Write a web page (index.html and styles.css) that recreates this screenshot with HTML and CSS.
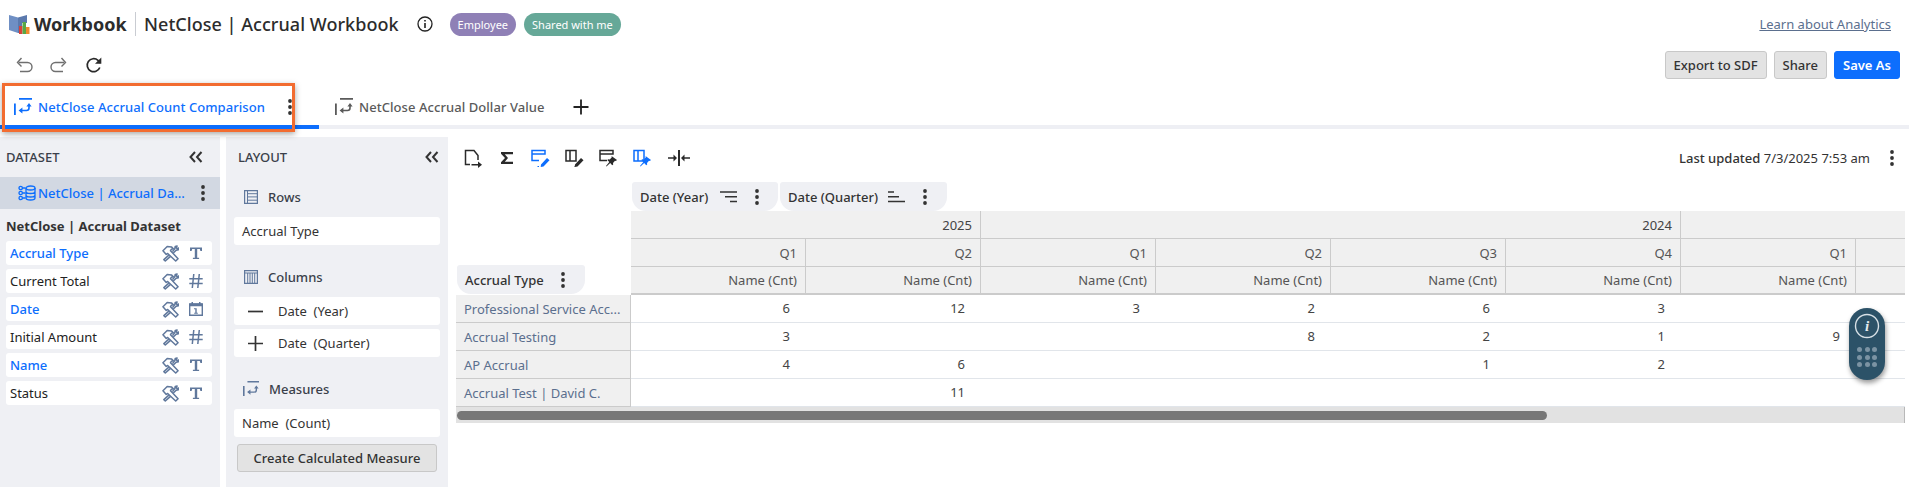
FILE: index.html
```html
<!DOCTYPE html>
<html lang="en">
<head>
<meta charset="utf-8">
<title>NetClose | Accrual Workbook</title>
<link rel="stylesheet" href="styles.css">
</head>
<body>
<svg class="sprite" width="0" height="0" aria-hidden="true">
  <symbol id="kebab" viewBox="0 0 4 18"><circle cx="2" cy="3" r="1.9"/><circle cx="2" cy="9" r="1.9"/><circle cx="2" cy="15" r="1.9"/></symbol>
  <symbol id="measure" viewBox="0 0 18 18"><path d="M0 5.500h1.800V17H0zM5 0h13v1.800H5z"/><path d="M6 12.500h6.500c1.600 0 2.500-1 2.500-2.500V7.800" fill="none" stroke="currentColor" stroke-width="1.600"/><path d="M8.400 9.500v6L4.600 12.500zM12.400 8.500h5.200L15 5z"/></symbol>
  <symbol id="tools" viewBox="0 0 18 18"><g fill="none" stroke="currentColor" stroke-width="1.600" stroke-linejoin="round"><path d="M1 6 5.500 1.500l4.500.5 2 2-2 .5-1 1.500 8 8.500-2.500 2.500-8.500-8-1.500 1z"/><path d="M7.500 10.500 2 15.500l1.500 1.500 5.500-5M11 7l2.500-3 .5-2.500 2-.5-1 2 1 1 2-1-.5 2-2.500.5-3 3"/></g></symbol>
  <symbol id="text" viewBox="0 0 14 14"><path d="M1 1.500h12v3.500h-1.600L10.800 3H8.200v8.800h1.900V13H3.900v-1.200h1.900V3H3.200L2.600 5H1z"/></symbol>
  <symbol id="hash" viewBox="0 0 14 14"><path d="M4.800 0 3.300 14M10.300 0 8.800 14M.3 4.700h13.400M.3 9.500h13.400" fill="none" stroke="currentColor" stroke-width="1.500"/></symbol>
  <symbol id="cal" viewBox="0 0 14 14"><path d="M.7 2h12.600v11.300H.7z" fill="none" stroke="currentColor" stroke-width="1.400"/><path d="M.7 1.500h12.600v2.700H.7zM2.500 0h1.500v2H2.500zM10 0h1.500v2H10zM5.200 10.800h3.600v1H5.200zM6.300 6.200h1.400v5H6.300zM5 6.200h1.500v1.100H5z"/></symbol>
  <symbol id="rows" viewBox="0 0 14 14"><path d="M.6.600h12.800v12.800H.6z" fill="none" stroke="currentColor" stroke-width="1.200"/><path d="M3.500.6v12.800M3.500 3.700h10M3.500 6.900h10M3.500 10.200h10" fill="none" stroke="currentColor" stroke-width="1"/></symbol>
  <symbol id="cols" viewBox="0 0 14 14"><path d="M.6.600h12.800v12.800H.6z" fill="none" stroke="currentColor" stroke-width="1.200"/><path d="M.6 3h12.800M3.700 3v10.400M6 3v10.400M8.300 3v10.400M10.700 3v10.400" fill="none" stroke="currentColor" stroke-width="1"/></symbol>
  <symbol id="chev" viewBox="0 0 14 12"><path d="M6 1 1.500 6 6 11M12.500 1 8 6l4.500 5" fill="none" stroke="currentColor" stroke-width="2"/></symbol>
  <symbol id="colpen" viewBox="0 0 20 18"><g fill="none" stroke="currentColor" stroke-width="1.500"><path d="M1 1.500h10v10.500H1zM5 1.500V12M11 6V1.500"/></g><path d="M10 15.500l6-6.500 2.500 2.300-6 6.200-2.800.5zM9.500 17h1.500v1H9.500z"/></symbol>
  <symbol id="rowpen" viewBox="0 0 20 18"><g fill="none" stroke="currentColor" stroke-width="1.500"><path d="M1 1.500h13v3.500H1zM1 5v6.500h7M14 1.500V5"/></g><path d="M10 15.500l6-6.500 2.500 2.300-6 6.200-2.800.5zM6.500 17h1.500v1H6.500z"/></symbol>
  <symbol id="rowpin" viewBox="0 0 20 18"><g fill="none" stroke="currentColor" stroke-width="1.500"><path d="M1 1.500h13v3.500H1zM1 5v6.500h7"/></g><path d="M12.500 7l5.500 4-1.200 1-.8-.3-2 2.300.2 1.500-1 .7-2-2.200-3.700 3.500-.5-.5 3.300-3.900-2-2 1-.9 1.500.3 2-2.300z"/></symbol>
  <symbol id="colpin" viewBox="0 0 20 18"><g fill="none" stroke="currentColor" stroke-width="1.500"><path d="M1 1.500h10v10.500H1zM5 1.500V12"/></g><path d="M12.500 7l5.500 4-1.200 1-.8-.3-2 2.300.2 1.500-1 .7-2-2.200-3.700 3.500-.5-.5 3.300-3.900-2-2 1-.9 1.500.3 2-2.300z"/></symbol>
</svg>

<header class="titlebar">
  <svg class="logo" viewBox="0 0 22 22" width="22" height="22"><path d="M1 2l9 2.500V20L1 17z" fill="#6f8fc4"/><path d="M10 4.500 19 2v8h-5v10h-4z" fill="#5b79ad"/><path d="M11 13h3.500v8H11z" fill="#d8423a"/><path d="M14.500 9H18v12h-3.500z" fill="#58a845"/><path d="M18 14h3.500v7H18z" fill="#f08a2c"/></svg>
  <span class="app-name">Workbook</span>
  <span class="title-divider"></span>
  <h1 class="wb-title">NetClose | Accrual Workbook</h1>
  <svg class="info" viewBox="0 0 16 16" width="16" height="16"><circle cx="8" cy="8" r="7" fill="none" stroke="#222" stroke-width="1.300"/><path d="M7.200 7h1.600v5H7.200zM7.200 3.900h1.600v1.700H7.200z" fill="#222"/></svg>
  <span class="badge badge-purple">Employee</span>
  <span class="badge badge-green">Shared with me</span>
  <a class="learn" href="#">Learn about Analytics</a>
</header>

<div class="actionbar">
  <svg class="act act-grey" viewBox="0 0 18 18" width="18" height="18"><path d="M4 6.500h8.500a4 4 0 0 1 0 9H5" fill="none" stroke="currentColor" stroke-width="1.400"/><path d="M6.500 2 2.500 6.500l4 4" fill="none" stroke="currentColor" stroke-width="1.400"/></svg>
  <svg class="act act-grey" viewBox="0 0 18 18" width="18" height="18"><path d="M14 6.500H5.500a4 4 0 0 0 0 9H13" fill="none" stroke="currentColor" stroke-width="1.400"/><path d="M11.500 2l4 4.500-4 4" fill="none" stroke="currentColor" stroke-width="1.400"/></svg>
  <svg class="act act-dark" viewBox="0 0 18 18" width="18" height="18"><path d="M14.800 11.500A6.500 6.500 0 1 1 13 4.300l2.500 2.500" fill="none" stroke="currentColor" stroke-width="1.700"/><path d="M16.300 1.500v6.300H10z" fill="currentColor"/></svg>
  <div class="btns">
    <button class="btn">Export to SDF</button>
    <button class="btn">Share</button>
    <button class="btn btn-primary">Save As</button>
  </div>
</div>

<nav class="tabs">
  <div class="tab tab-active">
    <svg class="tab-ico" width="18" height="18"><use href="#measure"/></svg>
    <span class="tab-label">NetClose Accrual Count Comparison</span>
    <svg class="kebab tab-kebab" width="4" height="18"><use href="#kebab"/></svg>
  </div>
  <div class="tab tab-other">
    <svg class="tab-ico" width="18" height="18"><use href="#measure"/></svg>
    <span class="tab-label">NetClose Accrual Dollar Value</span>
  </div>
  <svg class="tab-add" viewBox="0 0 16 16" width="16" height="16"><path d="M8 .5v15M.5 8h15" stroke="#222" stroke-width="1.800"/></svg>
  <div class="highlight"></div>
</nav>

<main class="workspace">
  <aside class="panel panel-data">
    <div class="panel-head"><span>DATASET</span><svg class="chev" width="14" height="12"><use href="#chev"/></svg></div>
    <div class="ds-row">
      <svg class="ds-ico" viewBox="0 0 18 16" width="18" height="16"><g fill="none" stroke="#0d6efd" stroke-width="1.300"><circle cx="2.700" cy="3" r="1.700"/><circle cx="2.700" cy="13" r="1.700"/><circle cx="2.700" cy="8" r="1.700"/><path d="M4.500 3h3M4.500 8h3M4.500 13h3"/><ellipse cx="12.500" cy="3" rx="4.500" ry="2"/><path d="M8 3v10c0 1 2 2 4.500 2s4.500-1 4.500-2V3M8 6.500c0 1 2 2 4.500 2s4.500-1 4.500-2M8 10c0 1 2 2 4.500 2s4.500-1 4.500-2"/></g></svg>
      <span class="ds-name">NetClose | Accrual Da...</span>
      <svg class="kebab" width="4" height="18"><use href="#kebab"/></svg>
    </div>
    <div class="ds-title">NetClose | Accrual Dataset</div>
    <ul class="fields">
      <li class="field field-on"><span class="f-name">Accrual Type</span><svg class="f-ico" width="17" height="17"><use href="#tools"/></svg><svg class="f-ico" width="14" height="14"><use href="#text"/></svg></li>
      <li class="field"><span class="f-name">Current Total</span><svg class="f-ico" width="17" height="17"><use href="#tools"/></svg><svg class="f-ico" width="14" height="14"><use href="#hash"/></svg></li>
      <li class="field field-on"><span class="f-name">Date</span><svg class="f-ico" width="17" height="17"><use href="#tools"/></svg><svg class="f-ico" width="14" height="14"><use href="#cal"/></svg></li>
      <li class="field"><span class="f-name">Initial Amount</span><svg class="f-ico" width="17" height="17"><use href="#tools"/></svg><svg class="f-ico" width="14" height="14"><use href="#hash"/></svg></li>
      <li class="field field-on"><span class="f-name">Name</span><svg class="f-ico" width="17" height="17"><use href="#tools"/></svg><svg class="f-ico" width="14" height="14"><use href="#text"/></svg></li>
      <li class="field"><span class="f-name">Status</span><svg class="f-ico" width="17" height="17"><use href="#tools"/></svg><svg class="f-ico" width="14" height="14"><use href="#text"/></svg></li>
    </ul>
  </aside>

  <aside class="panel panel-layout">
    <div class="panel-head"><span>LAYOUT</span><svg class="chev" width="14" height="12"><use href="#chev"/></svg></div>
    <div class="sec sec-rows"><svg class="sec-ico" width="14" height="14"><use href="#rows"/></svg><span>Rows</span></div>
    <div class="slot">Accrual Type</div>
    <div class="sec sec-cols"><svg class="sec-ico" width="14" height="14"><use href="#cols"/></svg><span>Columns</span></div>
    <div class="slot slot-exp"><svg class="exp" viewBox="0 0 15 15" width="15" height="15"><path d="M0 7.500h15" stroke="#333" stroke-width="1.700"/></svg>Date&nbsp; (Year)</div>
    <div class="slot slot-exp slot-next"><svg class="exp" viewBox="0 0 15 15" width="15" height="15"><path d="M0 7.500h15M7.500 0v15" stroke="#333" stroke-width="1.700"/></svg>Date&nbsp; (Quarter)</div>
    <div class="sec sec-meas"><svg class="sec-ico" width="16" height="16"><use href="#measure"/></svg><span>Measures</span></div>
    <div class="slot">Name&nbsp; (Count)</div>
    <button class="btn btn-calc">Create Calculated Measure</button>
  </aside>

  <section class="report">
    <div class="toolbar">
      <svg class="tb" viewBox="0 0 20 20" width="20" height="20"><path d="M7 16.500H2.500V2.500h8.500l4 5V12" fill="none" stroke="currentColor" stroke-width="1.500"/><path d="M8.500 16h7.500v1.500H8.500z"/><path d="M15 13.500l4 3.200-4 3.200z"/></svg>
      <svg class="tb" viewBox="0 0 20 20" width="20" height="20"><path d="M4 4h12v2.300H7.800L11 10l-3.200 3.700H16V16H4v-1.700L8 10 4 5.700z"/></svg>
      <svg class="tb tb-on" width="20" height="18"><use href="#rowpen"/></svg>
      <svg class="tb" width="20" height="18"><use href="#colpen"/></svg>
      <svg class="tb" width="20" height="18"><use href="#rowpin"/></svg>
      <svg class="tb tb-on" width="20" height="18"><use href="#colpin"/></svg>
      <svg class="tb" viewBox="0 0 24 20" width="24" height="20"><path d="M11 2h2v16h-2zM1 9.300h5.500V6.500L10 10l-3.500 3.500v-2.800H1zM23 9.300h-5.500V6.500L14 10l3.500 3.500v-2.800H23z"/></svg>
      <div class="updated"><strong>Last updated</strong> 7/3/2025 7:53 am</div>
      <svg class="kebab up-kebab" width="4" height="18"><use href="#kebab"/></svg>
    </div>

    <div class="chips">
      <div class="chip chip-y">Date (Year)
        <svg class="sort" viewBox="0 0 18 12" width="18" height="12"><path d="M0 1h17M5 5.800h12M10 10.500h7" stroke="#333" stroke-width="1.500"/></svg>
        <svg class="kebab" width="4" height="18"><use href="#kebab"/></svg>
      </div>
      <div class="chip chip-q">Date (Quarter)
        <svg class="sort" viewBox="0 0 18 12" width="18" height="12"><path d="M0 1h6M0 5.800h11M0 10.500h17" stroke="#333" stroke-width="1.500"/></svg>
        <svg class="kebab" width="4" height="18"><use href="#kebab"/></svg>
      </div>
    </div>

    <div class="pivot-wrap">
      <table class="pivot">
        <colgroup><col class="c"><col class="c"><col class="c"><col class="c"><col class="c"><col class="c"><col class="c"><col class="c"><col class="c"></colgroup>
        <thead>
          <tr>
            <th class="corner" rowspan="3"><span class="chip chip-a">Accrual Type <svg class="kebab" width="4" height="18"><use href="#kebab"/></svg></span></th>
            <th class="hd year" colspan="2">2025</th>
            <th class="hd year" colspan="4">2024</th>
            <th class="hd" colspan="2"></th>
          </tr>
          <tr><th class="hd">Q1</th><th class="hd">Q2</th><th class="hd">Q1</th><th class="hd">Q2</th><th class="hd">Q3</th><th class="hd">Q4</th><th class="hd">Q1</th><th class="hd"></th></tr>
          <tr class="last-hd"><th class="hd">Name (Cnt)</th><th class="hd">Name (Cnt)</th><th class="hd">Name (Cnt)</th><th class="hd">Name (Cnt)</th><th class="hd">Name (Cnt)</th><th class="hd">Name (Cnt)</th><th class="hd">Name (Cnt)</th><th class="hd"></th></tr>
        </thead>
        <tbody>
          <tr><th class="rh">Professional Service Acc...</th><td>6</td><td>12</td><td>3</td><td>2</td><td>6</td><td>3</td><td></td><td></td></tr>
          <tr><th class="rh">Accrual Testing</th><td>3</td><td></td><td></td><td>8</td><td>2</td><td>1</td><td>9</td><td></td></tr>
          <tr><th class="rh">AP Accrual</th><td>4</td><td>6</td><td></td><td></td><td>1</td><td>2</td><td></td><td></td></tr>
          <tr><th class="rh">Accrual Test | David C.</th><td></td><td>11</td><td></td><td></td><td></td><td></td><td></td><td></td></tr>
        </tbody>
      </table>
    </div>
    <div class="hscroll"><div class="thumb"></div></div>
  </section>
</main>

<div class="widget">
  <svg viewBox="0 0 26 26" width="26" height="26"><circle cx="13" cy="13" r="11.500" fill="none" stroke="#d7e0e6" stroke-width="1.400"/><text x="13" y="18" class="widget-i">i</text></svg>
  <div class="dots"><i></i><i></i><i></i><i></i><i></i><i></i><i></i><i></i><i></i></div>
</div>
</body>
</html>
```

FILE: styles.css
```css
* { box-sizing: border-box; }
html, body { margin: 0; height: 487px; overflow: hidden; }
body { font-family: "Noto Sans", "Open Sans", sans-serif; font-size: 13px; color: #333; background: #fff; }
.sprite { display: block; height: 0; }
svg { flex: none; fill: currentColor; }
ul { list-style: none; margin: 0; padding: 0; }
.kebab { color: #333; }

.titlebar { height: 50px; display: flex; align-items: center; padding: 0 18px 2px 8px; }
.logo { margin-right: 4px; }
.app-name { font-size: 18px; font-weight: 700; color: #2c2c2c; width: 95px; }
.title-divider { width: 1px; height: 24px; background: #c9ccd2; margin: 0 8px 0 6px; }
.wb-title { margin: 0; font-size: 18px; font-weight: 500; color: #2c2c2c; white-space: nowrap; letter-spacing: .04px; }
.info { margin: 0 17px 0 18px; }
.badge { height: 23px; border-radius: 12px; color: #fff; font-size: 11px; display: flex; align-items: center; padding: 0 8px; margin-right: 8px; }
.badge-purple { background: #8f80b6; }
.badge-green { background: #66a898; }
.learn { margin-left: auto; color: #5b6f8e; text-decoration: underline; font-size: 13px; }

.actionbar { height: 35px; display: flex; align-items: center; padding: 0 9px 5px 15px; }
.act { margin-right: 17px; }
.act-grey { color: #6f6f6f; }
.act-dark { color: #2a2a2a; }
.btns { margin-left: auto; display: flex; gap: 7px; }
.btn { height: 28px; border: 1px solid #c8c8c8; border-radius: 3px; background: #e3e3e3; color: #333; font: 500 13px "Noto Sans", "Open Sans", sans-serif; padding: 0 8px; }
.btn-primary { background: #0d6efd; border-color: #0d6efd; color: #fff; font-weight: 600; }

.tabs { position: relative; height: 44px; display: flex; align-items: stretch; border-bottom: 4px solid #eeeff4; }
.tab { display: flex; align-items: center; height: 44px; position: relative; font-weight: 500; letter-spacing: .06px; }
.tab-active { width: 319px; padding: 4px 0 0 14px; color: #0d6efd; border-bottom: 4px solid #0d6efd; }
.tab-other { color: #5a5a5a; padding-left: 16px; }
.tab-ico { margin-right: 6px; }
.tab-kebab { margin-left: 23px; }
.tab-add { align-self: center; margin: 4px 0 0 29px; }
.highlight { position: absolute; left: 2px; top: -2px; width: 293px; height: 49px; border: 3px solid #f26c30; box-shadow: 0 2px 6px rgba(0, 0, 0, .35); pointer-events: none; }

.workspace { margin-top: 8px; height: 350px; display: flex; }
.panel { background: #eff0f4; flex: none; }
.panel-data { width: 220px; margin-right: 6px; }
.panel-layout { width: 222px; padding: 0 8px; }
.panel-head { height: 40px; display: flex; align-items: center; justify-content: space-between; padding: 0 17px 0 6px; font-weight: 500; color: #3a3f4a; }
.panel-layout .panel-head { margin: 0 -8px; padding: 0 9px 0 12px; }
.chev { color: #333; }
.ds-row { height: 32px; background: #d2d8e2; display: flex; align-items: center; padding-left: 18px; }
.ds-name { color: #0d6efd; font-weight: 500; margin-left: 2px; white-space: nowrap; width: 163px; }
.ds-title { font-weight: 700; height: 32px; display: flex; align-items: center; padding: 2px 0 0 6px; color: #333; }
.fields { padding: 0 8px 0 6px; display: flex; flex-direction: column; gap: 4px; }
.field { height: 24px; background: #fff; border-radius: 3px; display: flex; align-items: center; padding: 0 9px 0 4px; color: #222; }
.field-on { color: #0d6efd; font-weight: 500; }
.f-name { flex: 1; white-space: nowrap; }
.f-ico { color: #60789c; margin-left: 10px; }
.sec { display: flex; align-items: center; height: 20px; color: #3a3f4a; font-weight: 500; padding-left: 10px; }
.sec-ico { color: #60789c; margin-right: 10px; }
.sec-rows { margin-top: 10px; margin-bottom: 10px; }
.sec-cols { margin-top: 22px; margin-bottom: 10px; }
.sec-meas { margin-top: 22px; margin-bottom: 10px; padding-left: 9px; }
.slot { height: 28px; background: #fff; border-radius: 3px; display: flex; align-items: center; padding-left: 8px; color: #333; white-space: nowrap; }
.slot-exp { padding-left: 14px; }
.slot-next { margin-top: 4px; }
.exp { margin-right: 15px; }
.btn-calc { width: 200px; margin: 7px 0 0 3px; display: block; padding: 0; }

.report { flex: 1; min-width: 0; padding-left: 8px; }
.toolbar { height: 45px; display: flex; align-items: center; padding: 0 15px 3px 7px; gap: 14px; }
.tb { color: #2a2a2a; }
.tb-on { color: #0d6efd; }
.updated { margin-left: auto; color: #333; }
.updated strong { font-weight: 500; }
.up-kebab { margin-left: 6px; }
.chips { height: 29px; display: flex; gap: 2px; padding-left: 176px; }
.chip { height: 29px; background: #eff0f4; border-radius: 3px 3px 14px 14px; display: inline-flex; align-items: center; font-weight: 500; color: #333; white-space: nowrap; padding: 0 8px; }
.chip-y { width: 146px; }
.chip-q { width: 167px; }
.sort { margin-left: 10px; }
.chip-y .sort { margin-left: 12px; }
.chip .kebab { margin-left: 17px; }
.chip-a { width: 128px; margin-left: 1px; justify-content: flex-start; }

.pivot-wrap { width: 1449px; overflow: hidden; }
.pivot { table-layout: fixed; width: 1575px; border-collapse: separate; border-spacing: 0; font-size: 13px; }
.c { width: 175px; }
.pivot th, .pivot td { height: 28px; padding: 0 8px 0 0; text-align: right; font-weight: 400; white-space: nowrap; }
.corner { vertical-align: bottom; text-align: left !important; padding: 0 0 1px 0 !important; }
.hd { background: #f0f0f0; color: #555; border-bottom: 1px solid #cbcbcb; border-right: 1px solid #cbcbcb; }
.year { color: #444; }
.last-hd .hd { border-bottom-width: 2px; }
.pivot .rh { text-align: left; background: #f0f0f0; color: #5b6f8e; border-bottom: 1px solid #cbcbcb; border-right: 1px solid #cbcbcb; padding: 0 0 0 8px; }
.pivot td { color: #444; border-bottom: 1px solid #e1e5ea; padding: 0 16px 2px 0; }
.hscroll { height: 16px; width: 1449px; background: #e2e2e2; padding: 4px 0 0 1px; border-right: 1px solid #b8b8b8; }
.thumb { width: 1090px; height: 9px; background: #777; border-radius: 5px; }

.widget { position: absolute; left: 1849px; top: 308px; width: 36px; height: 72px; background: #2c5268; border-radius: 18px; box-shadow: 1px 3px 5px rgba(0, 0, 0, .4); display: flex; flex-direction: column; align-items: center; padding-top: 5px; }
.widget-i { font: italic 700 15px "Liberation Serif", serif; fill: #e4ebef; text-anchor: middle; }
.dots { display: grid; grid-template-columns: repeat(3, 5px); gap: 2.500px; margin-top: 8px; }
.dots i { width: 5px; height: 5px; border-radius: 50%; background: #7b93a3; }
```
